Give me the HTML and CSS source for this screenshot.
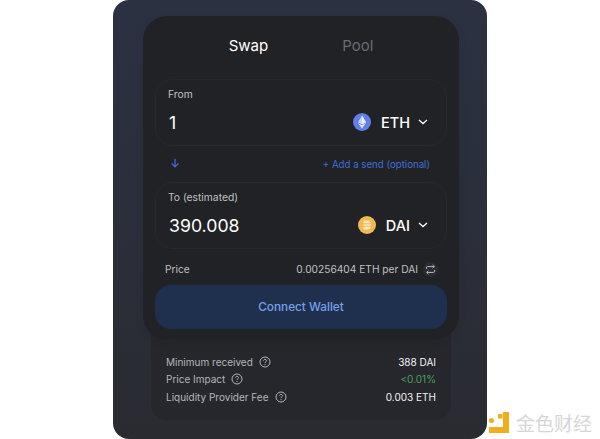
FILE: index.html
```html
<!DOCTYPE html>
<html lang="en">
<head>
<meta charset="utf-8">
<title>Swap</title>
<link rel="stylesheet" href="styles.css">
</head>
<body>
<main class="panel">
  <section class="card">
    <nav class="tabs">
      <span class="tab tab-active">Swap</span>
      <span class="tab tab-muted">Pool</span>
    </nav>
    <div class="field">
      <div class="field-label">From</div>
      <div class="field-row">
        <span class="amount">1</span>
        <span class="token">
          <svg class="token-icon" viewBox="0 0 18 18"><circle cx="9" cy="9" r="9" fill="#627eea"/><path d="M9 2.5 5 9.2 9 11.5 13 9.2Z" fill="#c9d4f8"/><path d="M9 2.5V11.5L13 9.2Z" fill="#e8edfc"/><path d="M5 10 9 15.5 13 10 9 12.3Z" fill="#e4e9fb"/></svg>
          <span class="token-name">ETH</span>
          <svg class="chevron" viewBox="0 0 10 6"><path d="M1 1 5 4.6 9 1" fill="none" stroke="#fff" stroke-width="1.4"/></svg>
        </span>
      </div>
    </div>
    <div class="send-row">
      <svg class="arrow" viewBox="0 0 10 10"><path d="M5 .8V8.6M1.6 5.4 5 8.8 8.4 5.4" fill="none" stroke="#3f70d8" stroke-width="1.2"/></svg>
      <span class="send-link">+ Add a send (optional)</span>
    </div>
    <div class="field">
      <div class="field-label">To (estimated)</div>
      <div class="field-row">
        <span class="amount">390.008</span>
        <span class="token">
          <svg class="token-icon" viewBox="0 0 18 18"><circle cx="9" cy="9" r="9" fill="#f0b952"/><path d="M5.5 4.5H9.5C12 4.5 13 6.5 13 9S12 13.5 9.500 13.500H5.500Z" fill="#fbe7bd"/><path d="M4.500 7.800H13.500M4.500 10.200H13.500" stroke="#f0b952" stroke-width="1"/></svg>
          <span class="token-name">DAI</span>
          <svg class="chevron" viewBox="0 0 10 6"><path d="M1 1 5 4.600 9 1" fill="none" stroke="#fff" stroke-width="1.400"/></svg>
        </span>
      </div>
    </div>
    <div class="price-row">
      <span class="price-label">Price</span>
      <span class="price-value">
        0.00256404 ETH per DAI
        <span class="swap-badge">
          <svg viewBox="0 0 12 12"><path d="M1.500 5.500V4.200C1.500 3.300 2.200 2.800 3 2.800H10M8.300 1 10.200 2.800 8.300 4.600M10.500 6.500V7.800C10.500 8.700 9.800 9.200 9 9.200H2M3.700 7.400 1.800 9.200 3.700 11" fill="none" stroke="#c3c5ca" stroke-width="1"/></svg>
        </span>
      </span>
    </div>
    <button class="connect" type="button">Connect Wallet</button>
  </section>
  <section class="details">
    <div class="detail-row">
      <span class="detail-label">Minimum received
        <svg class="help" viewBox="0 0 12 12"><circle cx="6" cy="6" r="5" fill="none" stroke="#b4b6bb"/><path d="M4.500 4.700C4.500 3.900 5.200 3.400 6 3.400S7.500 3.900 7.500 4.700C7.500 5.800 6 5.800 6 7" fill="none" stroke="#b4b6bb"/><circle cx="6" cy="8.600" r=".6" fill="#b4b6bb"/></svg>
      </span>
      <span class="detail-value">388 DAI</span>
    </div>
    <div class="detail-row">
      <span class="detail-label">Price Impact
        <svg class="help" viewBox="0 0 12 12"><circle cx="6" cy="6" r="5" fill="none" stroke="#b4b6bb"/><path d="M4.500 4.700C4.500 3.900 5.200 3.400 6 3.400S7.500 3.900 7.500 4.700C7.500 5.800 6 5.800 6 7" fill="none" stroke="#b4b6bb"/><circle cx="6" cy="8.600" r=".6" fill="#b4b6bb"/></svg>
      </span>
      <span class="detail-value detail-green">&lt;0.01%</span>
    </div>
    <div class="detail-row">
      <span class="detail-label">Liquidity Provider Fee
        <svg class="help" viewBox="0 0 12 12"><circle cx="6" cy="6" r="5" fill="none" stroke="#b4b6bb"/><path d="M4.500 4.700C4.500 3.900 5.200 3.400 6 3.400S7.500 3.900 7.500 4.700C7.500 5.800 6 5.800 6 7" fill="none" stroke="#b4b6bb"/><circle cx="6" cy="8.600" r=".6" fill="#b4b6bb"/></svg>
      </span>
      <span class="detail-value">0.003 ETH</span>
    </div>
  </section>
</main>
<aside class="watermark">
  <svg class="wm-logo" viewBox="0 0 22 22"><path d="M15 0H21V21H1V15H15Z" fill="#efae1e"/><rect x="10" y="2" width="4.500" height="4.500" fill="#efae1e"/><circle cx="3.500" cy="8.500" r="2.500" fill="#efae1e"/></svg>
  <span class="wm-text">金色财经</span>
</aside>
</body>
</html>
```
FILE: styles.css
```css
* { box-sizing: border-box; }
html, body { margin: 0; height: 100%; }
body {
  background: #fff;
  font-family: Inter, "Noto Sans", sans-serif;
  overflow: hidden;
  position: relative;
  display: flex;
  justify-content: center;
}
.panel {
  width: 374px;
  height: 439px;
  padding: 16px 28px 0 30px;
  border-radius: 16px;
  background: linear-gradient(180deg, #2b3142 0%, #2b2f3b 50%, #2a2b31 100%);
}
.card {
  position: relative;
  z-index: 1;
  width: 316px;
  height: 323px;
  padding: 12px 12px 0;
  border-radius: 24px;
  background: #212226;
  box-shadow: 0 4px 10px rgba(0, 0, 0, .08);
}
.tabs {
  display: flex;
  justify-content: center;
  gap: 74px;
  height: 51px;
  padding: 8px 0 0 0;
  font-size: 15px;
  line-height: 20px;
}
.tab-active { color: #fff; }
.tab-muted { color: #6a6c72; }
.field {
  height: 67px;
  padding: 7px 13px 0 12px;
  border: 1px solid #27282d;
  border-radius: 18px;
}
.field-label {
  font-size: 10.300px;
  line-height: 14px;
  color: #bfc1c5;
}
.field-row {
  display: flex;
  justify-content: space-between;
  align-items: center;
  margin-top: 7px;
  height: 28px;
}
.amount {
  font-size: 17.700px;
  padding-left: 1px;
  color: #fff;
}
.token {
  display: flex;
  align-items: center;
}
.token-icon { width: 18px; height: 18px; margin-right: 10px; }
.token-name { font-size: 14.500px; font-weight: 500; color: #fff; }
.chevron { width: 10px; height: 6px; margin: 0 5px 0 8px; }
.send-row {
  display: flex;
  justify-content: space-between;
  align-items: center;
  height: 36px;
  padding: 0 17px 0 15px;
}
.arrow { width: 10px; height: 10px; margin-bottom: 3px; }
.send-link { font-size: 9.700px; color: #3d6fd6; }
.price-row {
  display: flex;
  justify-content: space-between;
  align-items: center;
  height: 36px;
  padding: 4px 9px 0 10px;
  font-size: 10.200px;
  color: #bfc1c5;
}
.price-value { display: flex; align-items: center; gap: 5px; }
.swap-badge {
  display: flex;
  align-items: center;
  justify-content: center;
  width: 15px;
  height: 15px;
  border-radius: 50%;
  background: #2b2c31;
}
.swap-badge svg { width: 11px; height: 11px; }
.connect {
  display: block;
  width: 292px;
  height: 44px;
  border: 0;
  border-radius: 16px;
  background: #1f304f;
  color: #74a0ea;
  font: 500 11.800px Inter, sans-serif;
}
.details {
  width: 300px;
  height: 90px;
  margin: -9px 0 0 8px;
  padding: 23px 15px 0;
  border-radius: 0 0 16px 16px;
  background: #26272c;
}
.detail-row {
  display: flex;
  justify-content: space-between;
  align-items: center;
  height: 17.500px;
  font-size: 10px;
}
.detail-label { display: flex; align-items: center; gap: 6px; color: #b4b6bb; }
.help { width: 12px; height: 12px; }
.detail-value { color: #f4f4f5; }
.detail-green { color: #4ea05f; }
.watermark {
  position: absolute;
  left: 488px;
  top: 412px;
  display: flex;
  align-items: center;
  gap: 6px;
}
.wm-logo { width: 22px; height: 22px; }
.wm-text {
  font-family: "Noto Sans CJK SC", sans-serif;
  font-size: 19px;
  line-height: 22px;
  color: #d6d6d6;
}
```
